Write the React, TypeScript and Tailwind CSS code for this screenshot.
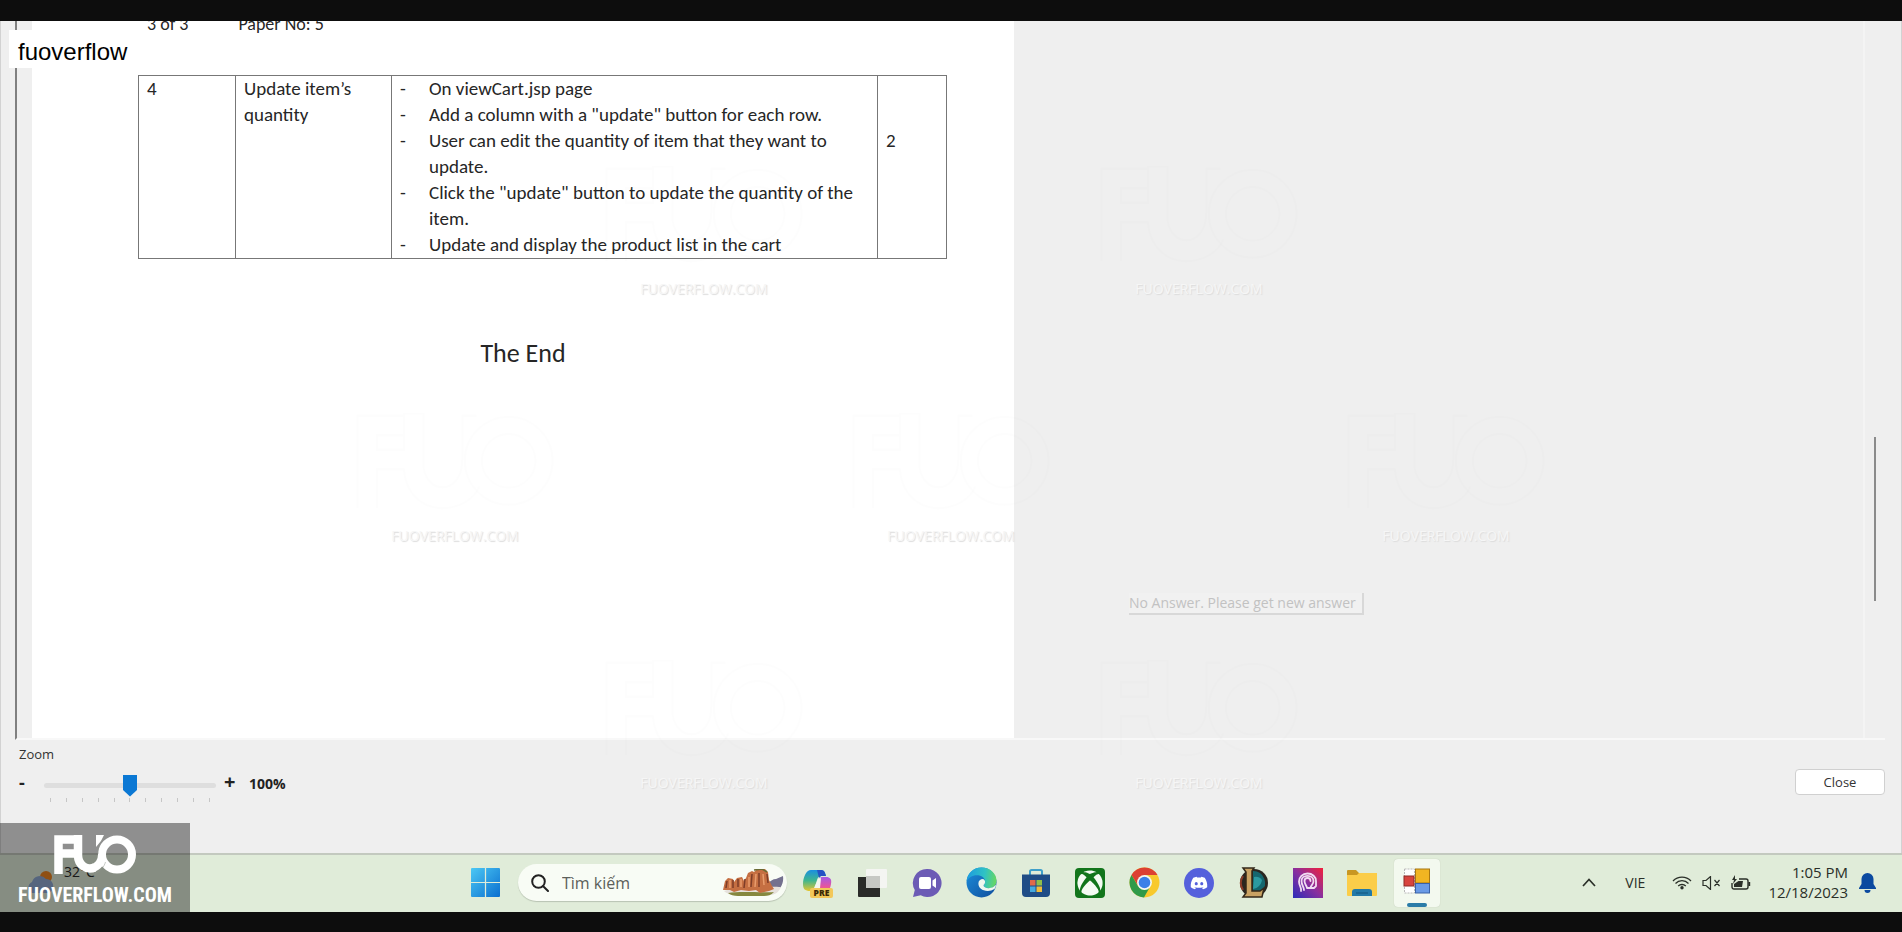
import { useState, type ReactNode } from 'react';
import { FaDiscord, FaXbox } from 'react-icons/fa';

const tasks = [
  'On viewCart.jsp page',
  'Add a column with a "update" button for each row.',
  'User can edit the quantity of item that they want to update.',
  'Click the "update" button to update the quantity of the item.',
  'Update and display the product list in the cart',
];

const watermarks = [
  'left-[604px] top-[166px]',
  'left-[1099px] top-[166px]',
  'left-[355px] top-[413px]',
  'left-[851px] top-[413px]',
  'left-[1346px] top-[413px]',
  'left-[604px] top-[660px]',
  'left-[1099px] top-[660px]',
];

function FuoMark({ className }: { className: string }) {
  return (
    <svg viewBox="0 0 82 39" className={className} fill="none" stroke="currentColor" aria-hidden="true">
      <path d="M4.500 39V4.500H20M4.500 18.500H20" strokeWidth="8.500" />
      <path d="M24 0V21A12 13 0 0 0 40.500 32.500" strokeWidth="8.500" />
      <path d="M42 0H50L47 6L42 12Z" fill="currentColor" stroke="none" />
      <circle cx="63" cy="19.500" r="15" strokeWidth="8" />
      <path d="M38 33.500C45 31 48 26 48 19.500" strokeWidth="8" />
      <path d="M41 38.500C47 36 50 32 51.500 27M44 19C44 11 47 5 52 1" stroke="#8f948d" strokeWidth=".7" opacity=".7" />
    </svg>
  );
}

function Watermarks() {
  return (
    <div className="pointer-events-none absolute inset-0 z-10 overflow-hidden" aria-hidden="true">
      {watermarks.map((place) => (
        <div key={place} className={`absolute flex w-[200px] flex-col items-center gap-[15px] ${place}`}>
          <svg viewBox="0 0 82 40" className="h-[98px] w-[200px]" fill="none" stroke="#000" strokeOpacity=".008" strokeWidth="1">
            <path d="M1 39V1H20V9H9V15H20V0H28V20C28 34 44 34 44 19V1H50M9 39V23H20C22 44 46 42 51 30" />
            <circle cx="63" cy="19.500" r="18" />
            <circle cx="63" cy="19.500" r="11" />
          </svg>
          <span className="text-[14px] leading-[20px] font-normal text-[#f6f6f6] [text-shadow:1px_1px_1px_#dcdcdc]">
            FUOVERFLOW.COM
          </span>
        </div>
      ))}
    </div>
  );
}

function QuestionTable() {
  return (
    <table className="w-[808px] table-fixed border-collapse text-left align-top text-[19px] leading-[26px]">
      <colgroup>
        <col className="w-[97px]" />
        <col className="w-[156px]" />
        <col className="w-[486px]" />
        <col className="w-[69px]" />
      </colgroup>
      <tbody>
        <tr className="align-top">
          <td className="border border-[#777] px-2">4</td>
          <td className="border border-[#777] px-2">Update item’s quantity</td>
          <td className="border border-[#777] px-2">
            <ul>
              {tasks.map((task) => (
                <li key={task} className="flex">
                  <span className="w-[29px] shrink-0">-</span>
                  <span>{task}</span>
                </li>
              ))}
            </ul>
          </td>
          <td className="border border-[#777] px-2 pt-[52px]">2</td>
        </tr>
      </tbody>
    </table>
  );
}

function ZoomControl() {
  const [zoom, setZoom] = useState(100);
  return (
    <div className="pt-1 pl-[18px]">
      <label htmlFor="zoom" className="block text-[13px] leading-5 text-[#333]">
        Zoom
      </label>
      <div className="mt-[6px] flex items-start text-[#222]">
        <button type="button" aria-label="Zoom out" className="w-[25px] text-left text-[18px] leading-6 font-bold" onClick={() => setZoom(Math.max(0, zoom - 20))}>
          -
        </button>
        <div className="w-[172px] pt-1">
          <input
            id="zoom"
            type="range"
            min={0}
            max={200}
            step={20}
            value={zoom}
            onChange={(e) => setZoom(Number(e.target.value))}
            className="block h-[22px] w-full appearance-none bg-transparent [&::-webkit-slider-runnable-track]:h-[5px] [&::-webkit-slider-runnable-track]:rounded-sm [&::-webkit-slider-runnable-track]:bg-[#dedede] [&::-webkit-slider-thumb]:-mt-2 [&::-webkit-slider-thumb]:h-[22px] [&::-webkit-slider-thumb]:w-[14px] [&::-webkit-slider-thumb]:appearance-none [&::-webkit-slider-thumb]:bg-[#0b78d4] [&::-webkit-slider-thumb]:[clip-path:polygon(0_0,100%_0,100%_70%,50%_100%,0_70%)]"
          />
          <div className="flex justify-between px-[6px] pt-[2px]">
            {Array.from({ length: 11 }, (_, i) => (
              <span key={i} className="h-1 w-px bg-[#c6c6c6]" />
            ))}
          </div>
        </div>
        <button type="button" aria-label="Zoom in" className="ml-2 w-[25px] text-left text-[20px] leading-6 font-bold" onClick={() => setZoom(Math.min(200, zoom + 20))}>
          +
        </button>
        <output htmlFor="zoom" className="pt-[2px] text-[14px] leading-6 font-bold">
          {zoom}%
        </output>
      </div>
    </div>
  );
}

function WindowsIcon() {
  return (
    <svg viewBox="0 0 28 28" className="size-[29px]" aria-hidden="true">
      <defs>
        <linearGradient id="win" x1="0" y1="0" x2="1" y2="1">
          <stop offset="0" stopColor="#4cc8f4" />
          <stop offset="1" stopColor="#0a6fd0" />
        </linearGradient>
      </defs>
      <path fill="url(#win)" d="M0 1a1 1 0 0 1 1-1h12.400v13.400H0zM14.600 0H27a1 1 0 0 1 1 1v12.400H14.600zM0 14.600h13.400V28H1a1 1 0 0 1-1-1zM14.600 14.600H28V27a1 1 0 0 1-1 1H14.600z" />
    </svg>
  );
}

function SearchScene() {
  return (
    <svg viewBox="0 0 62 28" className="mt-px h-[28px] w-[62px]" aria-hidden="true">
      <path d="M45 15c3-3 6-5 9-5l7-3c1 7-2 13-8 16H44z" fill="#74718f" />
      <path d="M2 22c10-4 48-5 57-4-2 5-6 8-12 8H14C8 26 4 24 2 22z" fill="#e6e1dc" />
      <path d="M6 24c12-2 34 0 46-1-3 3-6 4-10 4H16c-4 0-8-1-10-3z" fill="#85883e" />
      <path d="M1 21l2-9 3-3 5 1 1 3 3-4 5-1 2 4 2-3 2-5 4-2 2 1 3-3h8l3 3 1 8 3 6 2 3-5 2-9 2-4-3-7 1-8-1-7 2-4-2z" fill="#c56f42" />
      <path d="M5 12l-1 7M11 11v8M16 10v8M23 10l-1 9M30 5l-1 13M37 4v14M45 5l1 9" stroke="#7d3d28" strokeWidth="1.500" />
      <path d="M8 11v8M19 10v8M27 8v10M34 5l-1 13M41 5l1 11" stroke="#e89c6c" strokeWidth="1.500" />
      <path d="M32 1l8-1 5 3" stroke="#6a6b33" strokeWidth="1.500" fill="none" />
    </svg>
  );
}

function CopilotIcon() {
  return (
    <svg viewBox="0 0 32 30" className="h-[30px] w-[32px]" aria-hidden="true">
      <defs>
        <linearGradient id="cpa" x1="0" y1="0" x2="0" y2="1">
          <stop offset="0" stopColor="#1a8fe0" />
          <stop offset=".5" stopColor="#3fb68e" />
          <stop offset="1" stopColor="#e6c62f" />
        </linearGradient>
        <linearGradient id="cpb" x1="0" y1="0" x2="0" y2="1">
          <stop offset="0" stopColor="#a55be6" />
          <stop offset=".55" stopColor="#e8559b" />
          <stop offset="1" stopColor="#f78a4a" />
        </linearGradient>
      </defs>
      <path d="M9 2h10c3 0 4 2 5 6h-5c-2 0-3 1-4 4l-2 7c-1 3-2 4-5 4-5 0-7-2-7-7C1 10 4 2 9 2z" fill="url(#cpa)" />
      <path d="M15 2h4c3 0 4 2 5 6h-5l-2 2z" fill="#2553c4" />
      <path d="M20 9h4c4 0 6 2 5 7-1 6-4 11-9 11h-8c-2 0-3-1-4-4h3c3 0 4-2 5-5l1-5c1-3 1-4 3-4z" fill="url(#cpb)" />
      <path d="M16 11l3-1-1 10h-6z" fill="#f4f7ee" />
      <rect x="8" y="20" width="23" height="10" rx="2" fill="#f3c85a" />
      <text x="19.500" y="28.300" textAnchor="middle" fontSize="8.500" fontWeight="800" fill="#3b2a08" fontFamily="Open Sans, sans-serif">
        PRE
      </text>
    </svg>
  );
}

function TaskViewIcon() {
  return (
    <svg viewBox="0 0 30 30" className="size-[30px]" aria-hidden="true">
      <rect x="8" y="1" width="21" height="19" rx="1" fill="#f4f5f2" />
      <path d="M0 9h8v11h14v9H1a1 1 0 0 1-1-1z" fill="#2a2b29" />
      <rect x="8" y="8" width="14" height="12" fill="#c6c8c4" />
    </svg>
  );
}

function ChatIcon() {
  return (
    <svg viewBox="0 0 30 30" className="size-[30px]" aria-hidden="true">
      <path d="M15.500 1a14 14 0 1 1-6.800 26.200L1 29l1.800-7A14 14 0 0 1 15.500 1z" fill="#6c5bb5" />
      <rect x="7" y="9" width="12" height="12" rx="2" fill="#fff" />
      <path d="M20.500 12.500L24 10v10l-3.500-2.500z" fill="#fff" />
    </svg>
  );
}

function EdgeIcon() {
  return (
    <svg viewBox="0 0 30 30" className="size-[31px]" aria-hidden="true">
      <defs>
        <linearGradient id="edt" x1="0" y1=".3" x2="1" y2=".4">
          <stop offset="0" stopColor="#1d9be0" />
          <stop offset=".6" stopColor="#2fc2c4" />
          <stop offset="1" stopColor="#67d764" />
        </linearGradient>
        <linearGradient id="edb" x1="0" y1="0" x2="1" y2="1">
          <stop offset="0" stopColor="#1c8fdc" />
          <stop offset="1" stopColor="#104d9c" />
        </linearGradient>
      </defs>
      <circle cx="15" cy="15" r="14.500" fill="url(#edb)" />
      <path d="M.6 14C1 6 7 .5 15 .5c8.500 0 14.500 6 14.500 12.500 0 5-3.500 7.500-7.500 7.500-3 0-5-1-5-2.500 0-1 1.500-1.500 1.500-4C18.500 10.500 15 8 10.500 8 6 8 2 10.500.6 14z" fill="url(#edt)" />
      <path d="M12 16c0-3 2-4.500 4.500-4.500 1.300.6 2 1.600 2 2.800 0 2.200-1.500 2.700-1.500 3.700 0 1.500 2 2.500 5 2.500 3 0 5.500-1.300 6.800-3.500.2 2-.3 3.200-1.300 4.400-2 1.300-4 1.800-6.500 1.800C15.500 23.200 12 20 12 16z" fill="#eef7ee" />
    </svg>
  );
}

function StoreIcon() {
  return (
    <svg viewBox="0 0 30 30" className="size-[30px]" aria-hidden="true">
      <path d="M9 8V3.500A1.500 1.500 0 0 1 10.500 2h9A1.500 1.500 0 0 1 21 3.500V8" fill="none" stroke="#3f9fca" strokeWidth="2" />
      <path d="M1 6.500h28V25a4 4 0 0 1-4 4H5a4 4 0 0 1-4-4z" fill="#1f4c86" />
      <path d="M9 12h5.500v5.500H9z" fill="#e0694a" />
      <path d="M15.500 12H21v5.500h-5.500z" fill="#8fbf4a" />
      <path d="M9 18.500h5.500V24H9z" fill="#45a9df" />
      <path d="M15.500 18.500H21V24h-5.500z" fill="#f0bd3d" />
    </svg>
  );
}

function XboxIcon() {
  return (
    <span className="flex size-[30px] items-center justify-center rounded-sm bg-[#12751b] text-[26px] text-[#f5fbf3]">
      <FaXbox aria-hidden="true" />
    </span>
  );
}

function ChromeIcon() {
  return (
    <svg viewBox="0 0 30 30" className="size-[31px]" aria-hidden="true">
      <circle cx="15" cy="15" r="14.500" fill="#f8c92c" />
      <path d="M2.400 7.800A14.500 14.500 0 0 1 27.600 7.800H15L9 18.500z" fill="#dc4032" />
      <path d="M2.400 7.800L8.800 18.600 15 22l5.500-3.200L14.500 29.500A14.500 14.500 0 0 1 2.400 7.800z" fill="#2f9a49" />
      <circle cx="15" cy="15" r="7.200" fill="#f4f7f2" />
      <circle cx="15" cy="15" r="5.600" fill="#3a7fe8" />
    </svg>
  );
}

function DiscordIcon() {
  return (
    <span className="flex size-[30px] items-center justify-center rounded-full bg-[#5560dc] text-[18px] text-white">
      <FaDiscord aria-hidden="true" />
    </span>
  );
}

function LeagueIcon() {
  return (
    <svg viewBox="0 0 30 32" className="h-[32px] w-[30px]" aria-hidden="true">
      <circle cx="15" cy="16" r="14" fill="#2a2620" />
      <path d="M14 4a12 12 0 0 1 8 21h-8z" fill="#14666e" />
      <path d="M15 10a8 8 0 0 1 8 3c-1 5-4 8-9 9z" fill="#2b9aa1" />
      <path d="M4 9a13 13 0 0 0 0 14" stroke="#8a3b28" strokeWidth="2" fill="none" />
      <path d="M4 1h11l-2 3v20h8l4-3-2 9H4l3-4V5z" fill="#c9a263" stroke="#33281a" strokeWidth="1.500" />
    </svg>
  );
}

function ArcadeIcon() {
  return (
    <svg viewBox="0 0 30 30" className="size-[30px]" aria-hidden="true">
      <defs>
        <linearGradient id="arc" x1="0" y1="1" x2="1" y2="0">
          <stop offset="0" stopColor="#2a2cba" />
          <stop offset=".5" stopColor="#8a2f9e" />
          <stop offset="1" stopColor="#f2203c" />
        </linearGradient>
      </defs>
      <rect width="30" height="30" fill="url(#arc)" />
      <g fill="none" stroke="#f1dcf2" strokeWidth="1.800" strokeLinecap="round" strokeLinejoin="round">
        <path d="M8 23c1-3-2-5-2-9.500C6 9 9.500 5.500 14.500 5.500S23 9 23 13v5l-2 2h-3" />
        <path d="M11 22c0-3-2.500-5-2.500-9 0-3 2.500-5.200 6-5.200s6 2.200 6 5.200c0 4-3 4-3 7h-3.500c0-2-2.500-4-2.500-7 0-2 1.300-3 3-3s3 1 3 3" />
      </g>
    </svg>
  );
}

function FolderIcon() {
  return (
    <svg viewBox="0 0 30 28" className="h-[28px] w-[30px]" aria-hidden="true">
      <path d="M0 2a1 1 0 0 1 1-1h8l3 3h17a1 1 0 0 1 1 1v8H0z" fill="#c99722" />
      <path d="M0 6h10l2-2h18v22a1 1 0 0 1-1 1H1a1 1 0 0 1-1-1z" fill="#fbcd49" />
      <path d="M5 27v-4a3 3 0 0 1 3-3h14a3 3 0 0 1 3 3v4z" fill="#2279a8" />
      <path d="M9 24h12" stroke="#17608c" strokeWidth="1.500" />
    </svg>
  );
}

function FormsIcon() {
  return (
    <svg viewBox="0 0 28 26" className="h-[26px] w-[28px]" aria-hidden="true">
      <rect x="1.500" y="1" width="10" height="24" fill="#fff" stroke="#b9b9b9" strokeDasharray="2 1" />
      <rect x="1" y="8" width="10" height="10" fill="#d8443e" stroke="#8d2a26" />
      <rect x="12.500" y="1" width="14" height="14" fill="#f1b522" stroke="#a87711" />
      <rect x="12.500" y="15.500" width="14" height="9.500" fill="#6a9ae6" stroke="#3a62a8" />
    </svg>
  );
}

const apps: { name: string; icon: ReactNode }[] = [
  { name: 'Copilot', icon: <CopilotIcon /> },
  { name: 'Task view', icon: <TaskViewIcon /> },
  { name: 'Chat', icon: <ChatIcon /> },
  { name: 'Edge', icon: <EdgeIcon /> },
  { name: 'Store', icon: <StoreIcon /> },
  { name: 'Xbox', icon: <XboxIcon /> },
  { name: 'Chrome', icon: <ChromeIcon /> },
  { name: 'Discord', icon: <DiscordIcon /> },
  { name: 'League of Legends', icon: <LeagueIcon /> },
  { name: 'Arcade', icon: <ArcadeIcon /> },
  { name: 'File Explorer', icon: <FolderIcon /> },
];

function Tray() {
  return (
    <div className="flex items-center justify-end pr-[26px] text-[#2a2f28]">
      <button type="button" aria-label="Show hidden icons" className="mr-[29px]">
        <svg viewBox="0 0 14 9" className="h-[9px] w-[14px]" fill="none" stroke="currentColor" strokeWidth="1.700" aria-hidden="true">
          <path d="M1 8l6-6.500L13 8" />
        </svg>
      </button>
      <button type="button" className="mr-[27px] text-[14px] leading-5">
        VIE
      </button>
      <button type="button" aria-label="Network, volume and battery" className="mr-[17px] flex items-center gap-[10px]">
        <svg viewBox="0 0 20 15" className="h-[15px] w-[20px]" fill="none" stroke="currentColor" strokeWidth="1.300" aria-hidden="true">
          <path d="M1 6a12.500 12.500 0 0 1 18 0M3.500 8.500a9 9 0 0 1 13 0M6.200 11a5.500 5.500 0 0 1 7.600 0" />
          <circle cx="10" cy="12.800" r="1.700" fill="currentColor" stroke="none" />
        </svg>
        <svg viewBox="0 0 19 14" className="h-[14px] w-[19px]" fill="none" stroke="currentColor" strokeWidth="1.200" aria-hidden="true">
          <path d="M1 4.500h3l4.500-4v13L4 9.500H1zM12.500 4l5 6M17.500 4l-5 6" />
        </svg>
        <svg viewBox="0 0 20 16" className="h-[16px] w-[20px]" fill="none" stroke="currentColor" strokeWidth="1.400" aria-hidden="true">
          <path d="M8 4h7a2 2 0 0 1 2 2v6a2 2 0 0 1-2 2H3a2 2 0 0 1-2-2V8M18.500 7v4" />
          <path d="M7.500 6H12l-1 6H3V9z" fill="currentColor" stroke="none" />
          <path d="M4 0L1 5h2L2 9l4-5H4z" fill="currentColor" stroke="none" />
        </svg>
      </button>
      <button type="button" className="mr-[11px] pb-[2px] text-right text-[15px] leading-[20px]">
        <span className="block">1:05 PM</span>
        <span className="block">12/18/2023</span>
      </button>
      <button type="button" aria-label="Notifications">
        <svg viewBox="0 0 17 20" className="h-[20px] w-[17px]" fill="#0b4aa0" aria-hidden="true">
          <path d="M8.500 0a6 6 0 0 1 6 6v5l2.500 4v1H0v-1l2.500-4V6a6 6 0 0 1 6-6zM5.500 17h6a3 3 0 0 1-6 0z" />
        </svg>
      </button>
    </div>
  );
}

function Taskbar() {
  return (
    <div className="grid h-[59px] grid-cols-[1fr_auto_1fr] border-t-2 border-[#c3c9bf] bg-[#e0ecd9] pb-[2px]">
      <div className="flex items-start gap-2 pt-[7px] pl-[26px] text-[14px] leading-5 text-[#2a2a2a]">
        <svg viewBox="0 0 30 24" className="mt-2 h-6 w-[30px]" aria-hidden="true">
          <circle cx="20" cy="7" r="6" fill="#ee8420" />
          <path d="M6 23a6 6 0 0 1 0-11 8 8 0 0 1 14-3c5 0 8 4 7 9-1 3-3 5-6 5z" fill="#8fa9d2" />
        </svg>
        <span>32°C</span>
      </div>
      <div className="flex items-center">
        <button type="button" aria-label="Start" className="mr-[6px] flex w-[54px] justify-center">
          <WindowsIcon />
        </button>
        <div className="mr-1 flex h-[37px] w-[269px] items-center overflow-hidden rounded-full bg-[#f8fcf5] pr-[3px] pl-[13px] shadow-[0_1px_1px_#b9c4b3]">
          <svg viewBox="0 0 18 18" className="mr-[13px] size-[18px] shrink-0" fill="none" stroke="#222" strokeWidth="2" strokeLinecap="round" aria-hidden="true">
            <circle cx="7.500" cy="7.500" r="6.300" />
            <path d="M12.200 12.200L17 17" />
          </svg>
          <input
            type="text"
            aria-label="Tìm kiếm"
            placeholder="Tìm kiếm"
            className="min-w-0 flex-1 bg-transparent text-[16px] leading-6 outline-none placeholder:text-[#5c605a]"
          />
          <SearchScene />
        </div>
        <div className="grid h-full w-[653px] grid-cols-12">
          {apps.map((app) => (
            <button key={app.name} type="button" aria-label={app.name} className="flex items-center justify-center">
              {app.icon}
            </button>
          ))}
          <button
            type="button"
            aria-label="Exam client"
            className="mx-1 mt-1 mb-[3px] flex flex-col items-center justify-between rounded-sm bg-[#f3f9ef] pt-[9px] shadow-[0_0_1px_#b5bfae]"
          >
            <FormsIcon />
            <span className="h-1 w-[20px] rounded-full bg-[#2b7ca8]" />
          </button>
        </div>
      </div>
      <Tray />
    </div>
  );
}

export default function App() {
  return (
    <div className="relative flex min-h-screen flex-col overflow-hidden bg-[#0d0d0d] pt-[21px] pb-[20px] font-['Open_Sans','Noto_Sans',sans-serif]">
      <main className="flex flex-1 flex-col border-x border-[#d2d2d2] bg-[#efefef]">
        <div className="mr-[16px] ml-[14px] flex flex-1 overflow-hidden border-b-2 border-l-2 border-b-[#f8f8f8] border-l-[#808080]">
          <article className="ml-[15px] w-[982px] bg-white pl-[106px] font-['Carlito','Lato',sans-serif] text-[#262626]">
            <header className="-mt-[10px] flex gap-[50px] pl-[9px] text-[18px] leading-[26px]">
              <span>3 of 3</span>
              <span>Paper No: 5</span>
            </header>
            <div className="mt-[38px]">
              <QuestionTable />
            </div>
            <p className="mt-[78px] w-[770px] text-center text-[26px] leading-8">The End</p>
          </article>
          <div className="flex-1" />
          <div className="flex w-[22px] justify-center border-l-2 border-[#f4f4f4] pt-[416px]">
            <div className="h-[164px] w-[2px] bg-[#8b8b8b]" />
          </div>
        </div>
        <footer className="flex h-[113px] items-start justify-between">
          <ZoomControl />
          <button type="button" className="mt-[29px] mr-[16px] h-[26px] w-[90px] rounded border border-[#d0d0d0] bg-white text-[13px] leading-5 text-[#333]">
            Close
          </button>
        </footer>
      </main>
      <Taskbar />
      <Watermarks />
      <div className="absolute top-[30px] left-[9px] z-20 bg-white pt-[9px] pr-2 pb-[3px] pl-[9px] font-['Liberation_Sans',sans-serif] text-[24px] leading-[26px] text-black">
        fuoverflow
      </div>
      <div className="absolute top-[593px] left-[1129px] z-20 border-r-2 border-b-2 border-[#d8d8d8] bg-[#f1f1f1] pr-[6px] text-[14px] leading-5 text-[#c2c2c2]">
        No Answer. Please get new answer
      </div>
      <div className="absolute bottom-[20px] left-0 z-20 flex h-[89px] w-[190px] flex-col items-center bg-black/40 pt-[12px] text-white">
        <FuoMark className="h-[39px] w-[82px]" />
        <span className="mt-[9px] font-['Impact','Liberation_Sans_Narrow','Roboto_Condensed','Roboto',sans-serif] text-[20px] leading-6 font-bold whitespace-nowrap">
          FUOVERFLOW.COM
        </span>
      </div>
    </div>
  );
}
